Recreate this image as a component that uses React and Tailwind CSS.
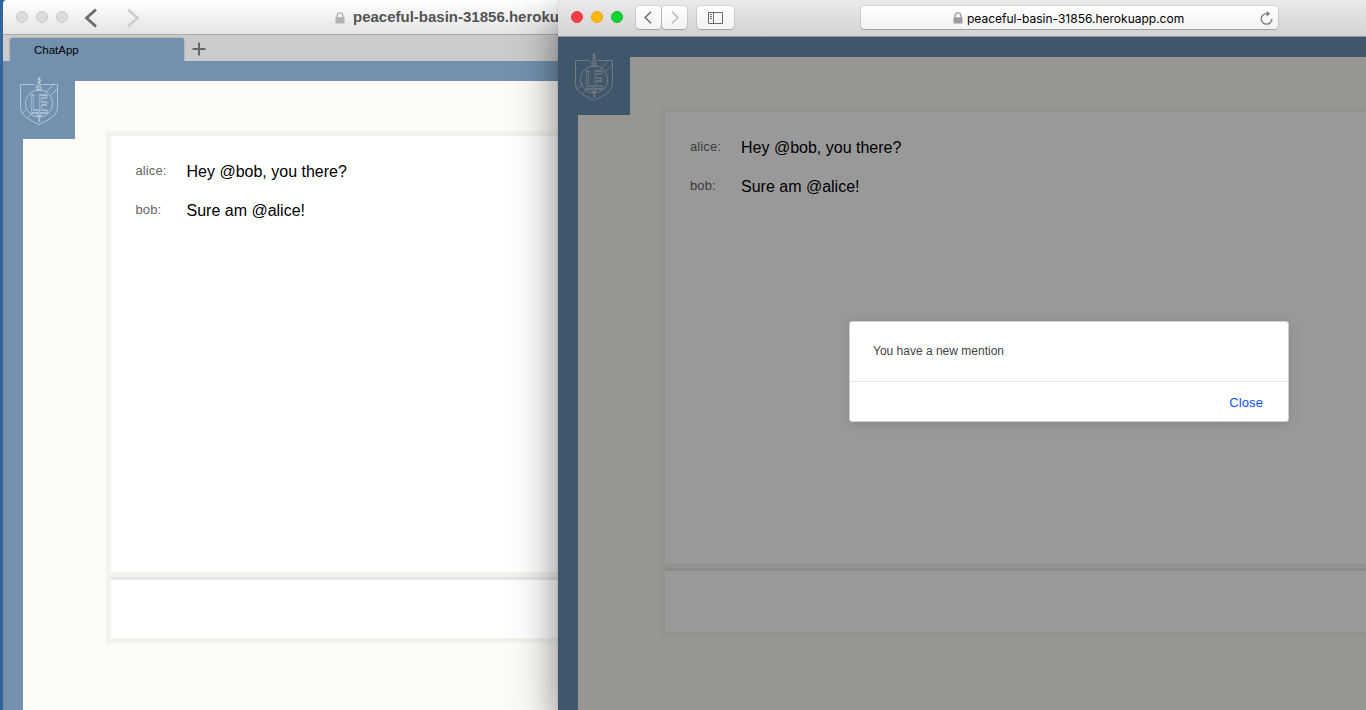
import React from "react";

const MESSAGES = [
  { author: "alice:", text: "Hey @bob, you there?" },
  { author: "bob:", text: "Sure am @alice!" },
];

function Crest({ className }) {
  return (
    <svg
      width="40"
      height="50"
      viewBox="0 0 40 50"
      fill="none"
      strokeWidth="1"
      className={className}
    >
      <path d="M16 8.5H1.5V31.5C1.5 40 11 44 20 48.5C29 44 38.5 40 38.5 31.5V8.5H23" />
      <circle cx="20" cy="27.5" r="13.6" />
      <path d="M27 16L34.5 8.5M31.5 19.5L38.5 12.5M2.5 38L8.5 32M8 42.5L13 37.5" />
      <path d="M20.5 1V8M18.8 3L21.8 5M21.5 8L18.5 6" strokeWidth="1.6" />
      <path d="M16.5 11.5L19 9H22.5M17.5 14.5L19 11H22V14.5ZM18 13H22" strokeWidth="1.2" />
      <path d="M17.5 39.5H22.5M20.3 39V46" strokeWidth="1.8" />
      <g transform="translate(11.4 36.6) scale(0.54 1)">
        <text
          x="0"
          y="0"
          className="font-['Liberation_Sans',sans-serif] text-[25px] font-bold"
          strokeWidth="1.3"
        >
          LE
        </text>
      </g>
    </svg>
  );
}

function ChatPage({ frame, logoTone, panelOffset, listLayout, inputHeight }) {
  return (
    <div className={`flex min-h-0 flex-1 flex-col overflow-hidden ${frame}`}>
      <div className="h-5 shrink-0" />
      <div className="flex min-h-0 flex-1">
        <div className="w-5 shrink-0" />
        <div className="flex min-w-0 flex-1 items-start bg-[#fcfbf6]">
          <div className={`h-[58px] w-[52px] shrink-0 ${frame}`}>
            <Crest className={`-mt-[5px] -ml-1 ${logoTone}`} />
          </div>
          <div className={`mt-[50px] w-[900px] shrink-0 border-[5px] border-r-0 border-[#f3f3ee] ${panelOffset}`}>
            <div className={`bg-white pt-[15px] ${listLayout}`}>
              {MESSAGES.map((m) => (
                <div key={m.author} className="flex h-[39px] items-center">
                  <span className="w-[51px] text-[13px] tracking-[0.1px] text-[#666]">{m.author}</span>
                  <span className="pt-0.5 text-base text-black">{m.text}</span>
                </div>
              ))}
            </div>
            <div className="h-[5px] bg-[#f3f3ee]" />
            <div className={`border-t-[3px] border-[#e5e6e4] bg-white ${inputHeight}`} />
          </div>
        </div>
      </div>
    </div>
  );
}

function Lock({ className }) {
  return (
    <svg width="10" height="12" viewBox="0 0 10 12" className={className}>
      <path d="M2.2 6V3.6a2.8 2.8 0 0 1 5.6 0V6" fill="none" stroke="currentColor" strokeWidth="1.3" />
      <rect x="0.5" y="5.3" width="9" height="6.2" rx="0.6" fill="currentColor" />
    </svg>
  );
}

function BackWindow() {
  return (
    <div className="absolute top-0 left-[3px] flex h-[710px] w-[760px] flex-col overflow-hidden rounded-tl-[4px] bg-[#7391af]">
      <div className="flex h-[35px] shrink-0 items-center border-b border-[#a8a9a9] bg-linear-to-b from-white to-[#e4e4e4] pl-[13px]">
        <div className="flex gap-2">
          <span className="size-3 rounded-full border border-[#c9c9c9] bg-[#dcdcdc]" />
          <span className="size-3 rounded-full border border-[#c9c9c9] bg-[#dcdcdc]" />
          <span className="size-3 rounded-full border border-[#c9c9c9] bg-[#dcdcdc]" />
        </div>
        <svg width="56" height="20" viewBox="0 0 56 20" fill="none" strokeWidth="2.8" className="mt-px ml-[16px]">
          <path d="M12 1.5L2.5 10L12 18.5" stroke="#6a6a6a" />
          <path d="M44 1.5L53.5 10L44 18.5" stroke="#cecece" />
        </svg>
        <Lock className="mt-px ml-[195px] text-[#b1b1b1]" />
        <span className="ml-[8px] text-[15px] font-bold text-[#545454]">
          peaceful-basin-31856.herokuapp.com
        </span>
      </div>
      <div className="flex h-[26px] shrink-0 items-end bg-[#cbcbcb] pl-[7px]">
        <div className="flex h-[23px] w-[174px] items-center rounded-t-[3px] bg-[#7391af] pt-0.5 pl-6 text-[11.5px] text-black shadow-[0_0_2px_rgba(0,0,0,0.35)]">
          ChatApp
        </div>
        <svg width="14" height="14" viewBox="0 0 14 14" className="mb-[5px] ml-[8px]">
          <path d="M7 0.5V13.5M0.5 7H13.5" stroke="#666" strokeWidth="2" />
        </svg>
      </div>
      <ChatPage
        frame="bg-[#7391af]"
        logoTone="stroke-[#aec4d7]"
        panelOffset="ml-[31px]"
        listLayout="h-[436px] pl-[24.5px]"
        inputHeight="h-[61px]"
      />
    </div>
  );
}

function MentionDialog() {
  return (
    <div className="absolute top-[321px] left-[291px] flex h-[101px] w-[440px] flex-col rounded-[3px] border border-[#cfcfcf] bg-white shadow-[0_2px_12px_rgba(0,0,0,0.12)]">
      <div className="flex h-[60px] items-center border-b border-[#e4e4e4] pb-0.5 pl-[23px] text-xs text-[#444]">
        You have a new mention
      </div>
      <div className="flex flex-1 items-center justify-end pr-[25px]">
        <button className="pt-0.5 text-[13px] tracking-[0.1px] text-[#0b50f5]">Close</button>
      </div>
    </div>
  );
}

const TOOL_BUTTON =
  "flex h-[23px] items-center justify-center rounded-[4px] bg-linear-to-b from-white to-[#f2f2f2] shadow-[0_0_0_1px_rgba(0,0,0,0.07),0_1px_1px_rgba(0,0,0,0.2)]";

function FrontWindow() {
  return (
    <div className="absolute top-0 left-[558px] flex h-[710px] w-[1020px] flex-col rounded-tl-[4px] shadow-[0_18px_44px_rgba(0,0,0,0.5),0_0_1px_rgba(0,0,0,0.5)]">
      <div className="flex h-[37px] shrink-0 items-center rounded-tl-[4px] border-b border-[#9b999b] bg-linear-to-b from-[#ebe9eb] to-[#d4d3d4] pb-px pl-[13px]">
        <div className="-mt-px flex gap-2">
          <span className="size-3 rounded-full border border-[#e9323b] bg-[#fc3f47]" />
          <span className="size-3 rounded-full border border-[#eda20a] bg-[#fdb90a]" />
          <span className="size-3 rounded-full border border-[#10b922] bg-[#0bd52f]" />
        </div>
        <div className="ml-[13px] flex gap-px">
          <div className={`w-[25px] ${TOOL_BUTTON}`}>
            <svg width="8" height="13" viewBox="0 0 8 13" fill="none" stroke="#6e6e6e" strokeWidth="1.5" className="mr-0.5">
              <path d="M7 0.7L1.2 6.5L7 12.3" />
            </svg>
          </div>
          <div className={`w-[25px] ${TOOL_BUTTON}`}>
            <svg width="8" height="13" viewBox="0 0 8 13" fill="none" stroke="#bcbcbc" strokeWidth="1.5">
              <path d="M1 0.7L6.8 6.5L1 12.3" />
            </svg>
          </div>
        </div>
        <div className={`ml-[10px] w-[37px] ${TOOL_BUTTON}`}>
          <svg width="15" height="12" viewBox="0 0 15 12" fill="none" stroke="#6a6a6a" strokeWidth="1">
            <path d="M0.5 0.5H14.5V11.5H0.5ZM5.5 0.5V11.5M2 2.5H4M2 4.5H4M2 6.5H4" />
          </svg>
        </div>
        <div className={`ml-[127px] w-[417px] ${TOOL_BUTTON}`}>
          <Lock className="ml-[92px] shrink-0 text-[#9c9c9c]" />
          <span className="ml-[4px] pt-0.5 font-['Inter',sans-serif] text-[12px] text-black">
            peaceful-basin-31856.herokuapp.com
          </span>
          <svg width="13" height="14" viewBox="0 0 13 14" className="mr-[5px] ml-auto">
            <path d="M11.8 7.6A5.3 5.3 0 1 1 6.5 2.6H8" fill="none" stroke="#7c7c7c" strokeWidth="1.3" />
            <path d="M6.6 0L10.2 2.8L6.6 5.4Z" fill="#7c7c7c" />
          </svg>
        </div>
      </div>
      <div className="relative flex min-h-0 flex-1 flex-col">
        <ChatPage
          frame="bg-[#6c90b2]"
          logoTone="stroke-[#bccad6]"
          panelOffset="ml-[30px]"
          listLayout="h-[451px] pl-[25px]"
          inputHeight="h-[64px]"
        />
        <div className="absolute inset-0 bg-black/40" />
      </div>
      <MentionDialog />
    </div>
  );
}

export default function App() {
  return (
    <main className="relative h-[710px] w-[1366px] overflow-hidden bg-[#32659c] font-['Liberation_Sans',sans-serif]">
      <BackWindow />
      <FrontWindow />
    </main>
  );
}
